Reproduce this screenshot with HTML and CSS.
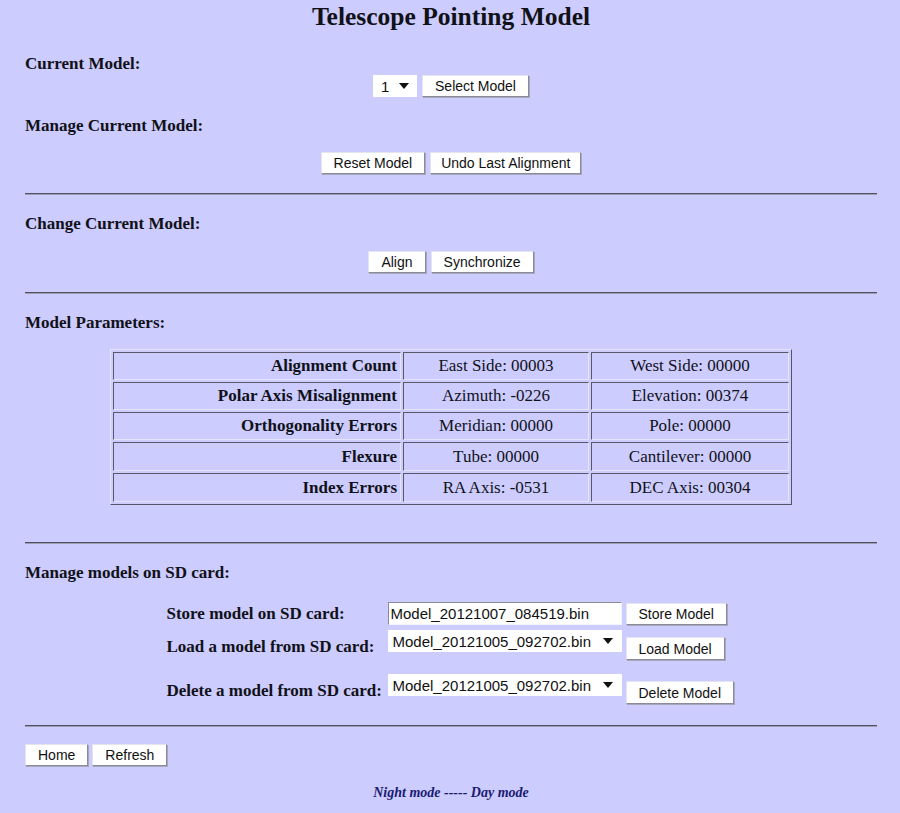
FILE: index.html
```html
<!DOCTYPE html>
<html>
<head>
<meta charset="utf-8">
<title>Telescope Pointing Model</title>
<link rel="stylesheet" href="styles.css">
</head>
<body>
<div class="page">
  <h1 class="title">Telescope Pointing Model</h1>

  <h2 class="section s-first">Current Model:</h2>
  <div class="controls c-select">
    <span class="select select-small">
      <select><option>1</option></select>
      <svg class="arrow" width="10" height="6" viewBox="0 0 10 6"><path d="M0 0H10L5 6Z" fill="#111"/></svg>
    </span>
    <button class="btn">Select Model</button>
  </div>

  <h2 class="section">Manage Current Model:</h2>
  <div class="controls c-manage">
    <button class="btn">Reset Model</button>
    <button class="btn btn-narrow">Undo Last Alignment</button>
  </div>

  <hr class="rule">

  <h2 class="section">Change Current Model:</h2>
  <div class="controls c-change">
    <button class="btn">Align</button>
    <button class="btn">Synchronize</button>
  </div>

  <hr class="rule">

  <h2 class="section">Model Parameters:</h2>
  <table class="params">
    <colgroup><col class="col1"><col class="col2"><col class="col3"></colgroup>
    <tr><th>Alignment Count</th><td>East Side: 00003</td><td>West Side: 00000</td></tr>
    <tr><th>Polar Axis Misalignment</th><td>Azimuth: -0226</td><td>Elevation: 00374</td></tr>
    <tr><th>Orthogonality Errors</th><td>Meridian: 00000</td><td>Pole: 00000</td></tr>
    <tr><th>Flexure</th><td>Tube: 00000</td><td>Cantilever: 00000</td></tr>
    <tr><th>Index Errors</th><td>RA Axis: -0531</td><td>DEC Axis: 00304</td></tr>
  </table>

  <hr class="rule rule-sd">

  <h2 class="section">Manage models on SD card:</h2>
  <div class="sd">
    <div class="sd-row">
      <label class="sd-label sd-label-first">Store model on SD card:</label>
      <input class="field" type="text" value="Model_20121007_084519.bin">
      <button class="btn sd-btn sd-btn-first">Store Model</button>
    </div>
    <div class="sd-row sd-row-2">
      <label class="sd-label">Load a model from SD card:</label>
      <span class="select select-wide">
        <select><option>Model_20121005_092702.bin</option></select>
        <svg class="arrow" width="10" height="6" viewBox="0 0 10 6"><path d="M0 0H10L5 6Z" fill="#111"/></svg>
      </span>
      <button class="btn sd-btn">Load Model</button>
    </div>
    <div class="sd-row sd-row-3">
      <label class="sd-label">Delete a model from SD card:</label>
      <span class="select select-wide">
        <select><option>Model_20121005_092702.bin</option></select>
        <svg class="arrow" width="10" height="6" viewBox="0 0 10 6"><path d="M0 0H10L5 6Z" fill="#111"/></svg>
      </span>
      <button class="btn sd-btn">Delete Model</button>
    </div>
  </div>

  <hr class="rule rule-foot">

  <div class="footer-btns">
    <button class="btn">Home</button>
    <button class="btn">Refresh</button>
  </div>

  <p class="modes"><a class="mode-link">Night mode</a> ----- <a class="mode-link">Day mode</a></p>
</div>
</body>
</html>
```

FILE: styles.css
```css
html, body {
  margin: 0;
  padding: 0;
  background: #ccccfe;
}

body {
  font-family: "Liberation Serif", "Times New Roman", serif;
  color: #111118;
}

.page {
  padding: 0 23px 0 25px;
  height: 813px;
  box-sizing: border-box;
  overflow: hidden;
}

.title {
  margin: 3px 0 0;
  font-size: 25.5px;
  line-height: 28px;
  font-weight: bold;
  text-align: center;
}

.section {
  margin: 19px 0 0;
  font-size: 17px;
  line-height: 20px;
  font-weight: bold;
}

.s-first {
  margin-top: 23px;
}

.controls {
  display: flex;
  justify-content: center;
  align-items: flex-start;
  gap: 5px;
}

.c-select { margin-top: 1px; }
.c-manage { margin-top: 16px; }
.c-change { margin-top: 17px; }

.btn {
  box-sizing: border-box;
  height: 22px;
  padding: 0 12px;
  margin: 0;
  font-family: "Liberation Sans", Arial, sans-serif;
  font-size: 14px;
  line-height: 20px;
  color: #111;
  background: #ffffff;
  border: 1px solid;
  border-color: #e4e4ee #8a8a9a #8a8a9a #e4e4ee;
  border-radius: 0;
  box-shadow: 1px 1px 0 #a8a8bc;
}

.btn-narrow {
  padding: 0 10px;
}

.select {
  display: inline-flex;
  align-items: center;
  box-sizing: border-box;
  height: 22px;
  background: #ffffff;
}

.select select {
  appearance: none;
  -webkit-appearance: none;
  border: none;
  outline: none;
  background: transparent;
  margin: 0;
  padding: 0;
  font-family: "Liberation Sans", Arial, sans-serif;
  color: #111;
}

.select-small {
  width: 44px;
  padding: 0 8px 0 8px;
}

.select-small select {
  font-size: 15px;
  width: 18px;
}

.select-wide {
  width: 234px;
  padding: 0 9px 0 5px;
}

.select-wide select {
  flex: 1;
  font-size: 15px;
}

.arrow {
  flex: none;
  display: block;
}

.rule {
  margin: 19px 0 0;
  height: 0;
  border: none;
  border-top: 1px solid #505060;
  border-bottom: 1px solid #9c9cb4;
}

.rule-sd { margin-top: 37px; }
.rule-foot { margin-top: 21px; }

.params {
  margin: 16px auto 0;
  width: 682px;
  table-layout: fixed;
  border-collapse: separate;
  border-spacing: 2px;
  border: 1px solid;
  border-color: #e4e4f8 #555566 #555566 #e4e4f8;
  font-size: 17px;
}

.col1 { width: 288px; }
.col2 { width: 186px; }
.col3 { width: 198px; }

.params th,
.params td {
  height: 28px;
  box-sizing: border-box;
  padding: 0 3px;
  line-height: 20px;
  border: 1px solid;
  border-color: #585868 #e4e4f8 #e4e4f8 #585868;
  white-space: nowrap;
}

.params tr:nth-child(n+4) th,
.params tr:nth-child(n+4) td {
  height: 29px;
}

.params th {
  text-align: right;
  font-weight: bold;
}

.params td {
  text-align: center;
  font-weight: normal;
}

.sd {
  width: 569px;
  margin: 19px auto 0;
}

.sd-row {
  display: flex;
  align-items: flex-start;
}

.sd-row-2 { margin-top: 5px; }
.sd-row-3 { margin-top: 14px; }

.sd-label {
  flex: none;
  width: 221px;
  font-size: 17px;
  line-height: 20px;
  font-weight: bold;
  margin-top: 7px;
  white-space: nowrap;
}

.sd-label-first {
  margin-top: 2px;
}

.field {
  box-sizing: border-box;
  width: 234px;
  height: 23px;
  margin: 0;
  padding: 0 2px;
  font-family: "Liberation Sans", Arial, sans-serif;
  font-size: 15px;
  color: #111;
  background: #fff;
  border: 1px solid;
  border-color: #8a8a9a #f4f4fc #f4f4fc #8a8a9a;
  outline: none;
}

.sd-btn {
  margin-left: 4px;
  margin-top: 7px;
  height: 23px;
}

.sd-btn-first {
  margin-top: 1px;
  height: 22px;
}

.footer-btns {
  display: flex;
  gap: 4px;
  margin-top: 17px;
}

.modes {
  margin: 18px 0 0;
  text-align: center;
  font-size: 14px;
  line-height: 18px;
  font-style: italic;
  font-weight: bold;
  color: #1a1a70;
}

.mode-link {
  color: #1a1a70;
}
```
